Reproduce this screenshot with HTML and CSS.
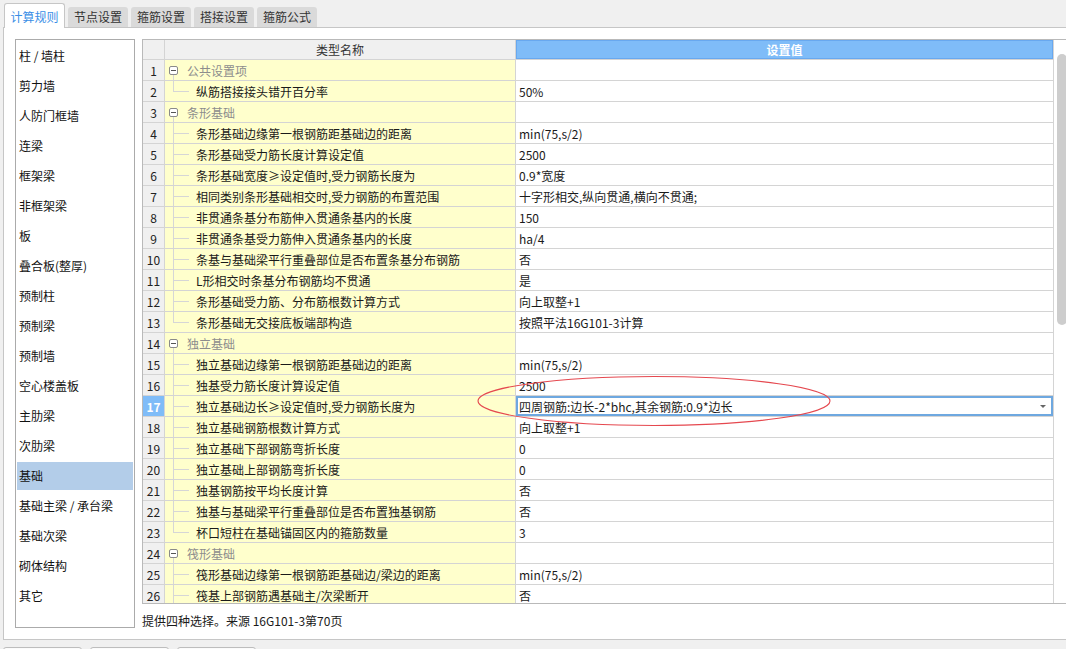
FILE: index.html
```html
<!DOCTYPE html>
<html lang="zh-CN">
<head>
<meta charset="utf-8">
<title>计算规则</title>
<link rel="stylesheet" href="styles.css">
</head>
<body>
<div class="tabs">
  <div class="tab active">计算规则</div>
  <div class="tab">节点设置</div>
  <div class="tab">箍筋设置</div>
  <div class="tab">搭接设置</div>
  <div class="tab">箍筋公式</div>
</div>
<div class="panel">
  <ul class="cats">
    <li>柱 / 墙柱</li>
    <li>剪力墙</li>
    <li>人防门框墙</li>
    <li>连梁</li>
    <li>框架梁</li>
    <li>非框架梁</li>
    <li>板</li>
    <li>叠合板(整厚)</li>
    <li>预制柱</li>
    <li>预制梁</li>
    <li>预制墙</li>
    <li>空心楼盖板</li>
    <li>主肋梁</li>
    <li>次肋梁</li>
    <li class="sel">基础</li>
    <li>基础主梁 / 承台梁</li>
    <li>基础次梁</li>
    <li>砌体结构</li>
    <li>其它</li>
  </ul>
  <div class="main">
    <div class="grid">
      <div class="tbl">
        <div class="row head"><div class="num"></div><div class="name">类型名称</div><div class="val">设置值</div></div>
        <div class="row grp"><div class="num">1</div><div class="name"><span class="box"></span><span class="t">公共设置项</span></div><div class="val"></div></div>
        <div class="row"><div class="num">2</div><div class="name"><span class="br last"></span><span class="t">纵筋搭接接头错开百分率</span></div><div class="val">50%</div></div>
        <div class="row grp"><div class="num">3</div><div class="name"><span class="box"></span><span class="t">条形基础</span></div><div class="val"></div></div>
        <div class="row"><div class="num">4</div><div class="name"><span class="br"></span><span class="t">条形基础边缘第一根钢筋距基础边的距离</span></div><div class="val">min(75,s/2)</div></div>
        <div class="row"><div class="num">5</div><div class="name"><span class="br"></span><span class="t">条形基础受力筋长度计算设定值</span></div><div class="val">2500</div></div>
        <div class="row"><div class="num">6</div><div class="name"><span class="br"></span><span class="t">条形基础宽度≥设定值时,受力钢筋长度为</span></div><div class="val">0.9*宽度</div></div>
        <div class="row"><div class="num">7</div><div class="name"><span class="br"></span><span class="t">相同类别条形基础相交时,受力钢筋的布置范围</span></div><div class="val">十字形相交,纵向贯通,横向不贯通;</div></div>
        <div class="row"><div class="num">8</div><div class="name"><span class="br"></span><span class="t">非贯通条基分布筋伸入贯通条基内的长度</span></div><div class="val">150</div></div>
        <div class="row"><div class="num">9</div><div class="name"><span class="br"></span><span class="t">非贯通条基受力筋伸入贯通条基内的长度</span></div><div class="val">ha/4</div></div>
        <div class="row"><div class="num">10</div><div class="name"><span class="br"></span><span class="t">条基与基础梁平行重叠部位是否布置条基分布钢筋</span></div><div class="val">否</div></div>
        <div class="row"><div class="num">11</div><div class="name"><span class="br"></span><span class="t">L形相交时条基分布钢筋均不贯通</span></div><div class="val">是</div></div>
        <div class="row"><div class="num">12</div><div class="name"><span class="br"></span><span class="t">条形基础受力筋、分布筋根数计算方式</span></div><div class="val">向上取整+1</div></div>
        <div class="row"><div class="num">13</div><div class="name"><span class="br last"></span><span class="t">条形基础无交接底板端部构造</span></div><div class="val">按照平法16G101-3计算</div></div>
        <div class="row grp"><div class="num">14</div><div class="name"><span class="box"></span><span class="t">独立基础</span></div><div class="val"></div></div>
        <div class="row"><div class="num">15</div><div class="name"><span class="br"></span><span class="t">独立基础边缘第一根钢筋距基础边的距离</span></div><div class="val">min(75,s/2)</div></div>
        <div class="row"><div class="num">16</div><div class="name"><span class="br"></span><span class="t">独基受力筋长度计算设定值</span></div><div class="val">2500</div></div>
        <div class="row cur"><div class="num">17</div><div class="name"><span class="br"></span><span class="t">独立基础边长≥设定值时,受力钢筋长度为</span></div><div class="val"><span>四周钢筋:边长-2*bhc,其余钢筋:0.9*边长</span><span class="drop"></span></div></div>
        <div class="row"><div class="num">18</div><div class="name"><span class="br"></span><span class="t">独立基础钢筋根数计算方式</span></div><div class="val">向上取整+1</div></div>
        <div class="row"><div class="num">19</div><div class="name"><span class="br"></span><span class="t">独立基础下部钢筋弯折长度</span></div><div class="val">0</div></div>
        <div class="row"><div class="num">20</div><div class="name"><span class="br"></span><span class="t">独立基础上部钢筋弯折长度</span></div><div class="val">0</div></div>
        <div class="row"><div class="num">21</div><div class="name"><span class="br"></span><span class="t">独基钢筋按平均长度计算</span></div><div class="val">否</div></div>
        <div class="row"><div class="num">22</div><div class="name"><span class="br"></span><span class="t">独基与基础梁平行重叠部位是否布置独基钢筋</span></div><div class="val">否</div></div>
        <div class="row"><div class="num">23</div><div class="name"><span class="br last"></span><span class="t">杯口短柱在基础锚固区内的箍筋数量</span></div><div class="val">3</div></div>
        <div class="row grp"><div class="num">24</div><div class="name"><span class="box"></span><span class="t">筏形基础</span></div><div class="val"></div></div>
        <div class="row"><div class="num">25</div><div class="name"><span class="br"></span><span class="t">筏形基础边缘第一根钢筋距基础边/梁边的距离</span></div><div class="val">min(75,s/2)</div></div>
        <div class="row"><div class="num">26</div><div class="name"><span class="br"></span><span class="t">筏基上部钢筋遇基础主/次梁断开</span></div><div class="val">否</div></div>
      </div>
      <div class="vscroll"><div class="thumb"></div></div>
    </div>
    <div class="hint">提供四种选择。来源 16G101-3第70页</div>
  </div>
</div>
<div class="btns"><span></span><span></span><span></span></div>
<svg class="mark" width="370" height="64" viewBox="0 0 370 64"><ellipse cx="184" cy="31" rx="176" ry="24.5" fill="none" stroke="#e5484f" stroke-width="1.1"/></svg>
</body>
</html>
```
FILE: styles.css
```css
html, body {
  margin: 0;
  padding: 0;
}
body {
  width: 1066px;
  height: 649px;
  overflow: hidden;
  position: relative;
  background: #f0f0f0;
  font-family: "Noto Sans CJK SC", "Microsoft YaHei", sans-serif;
  font-size: 12px;
  color: #1a1a1a;
}

/* tabs */
.tabs {
  display: flex;
  align-items: flex-end;
  height: 27px;
  padding-left: 4px;
  gap: 3px;
}
.tab {
  width: 60px;
  height: 20px;
  line-height: 20px;
  text-align: center;
  background: #dadada;
  border-radius: 3px 3px 0 0;
  color: #333;
  box-sizing: border-box;
}
.tab.active {
  width: 61px;
  height: 25px;
  line-height: 26px;
  background: #fff;
  border: 1px solid #c6c6c6;
  border-bottom: none;
  color: #3a8ee6;
  margin-bottom: -1px;
  position: relative;
  z-index: 1;
}

/* panel */
.panel {
  margin-left: 3px;
  width: 1075px;
  height: 613px;
  box-sizing: border-box;
  border: 1px solid #c6c6c6;
  background: #fff;
  padding: 11px 0 0 11px;
  display: flex;
}
.cats {
  list-style: none;
  margin: 0;
  padding: 2px 1px;
  width: 120px;
  height: 589px;
  box-sizing: border-box;
  border: 1px solid #ababab;
  flex: none;
}
.cats li {
  height: 28px;
  line-height: 28px;
  padding-left: 2px;
  margin-bottom: 2px;
  color: #111;
  white-space: nowrap;
}
.cats li.sel {
  background: #b3cde9;
}

.main {
  margin-left: 7px;
  display: flex;
  flex-direction: column;
}
.grid {
  width: 935px;
  height: 565px;
  box-sizing: border-box;
  border: 1px solid #b9b9b9;
  display: flex;
  overflow: hidden;
}
.tbl {
  width: 911px;
  flex: none;
}
.row {
  display: flex;
  height: 21px;
  box-sizing: border-box;
  border-bottom: 1px solid #d4d4d4;
}
.row > div {
  box-sizing: border-box;
  border-right: 1px solid #d4d4d4;
  display: flex;
  align-items: center;
  white-space: nowrap;
  overflow: hidden;
}
.num {
  width: 22px;
  justify-content: center;
  background: #f0f0f0;
  color: #222;
}
.name {
  width: 351px;
  background: #ffffcc;
}
.val {
  width: 538px;
  padding-left: 3px;
  background: #fff;
}
.row.head {
  height: 20px;
}
.row.head .name {
  background: #f0f0f0;
  justify-content: center;
  color: #333;
}
.row.head .val {
  background: #7fbcf8;
  justify-content: center;
  color: #fff;
  font-weight: bold;
  box-shadow: inset 0 0 0 1px #68a8ef;
  padding-left: 0;
}
.row.grp .name {
  background: linear-gradient(#d6d6d6, #d6d6d6) 8px 15px / 1px 6px no-repeat, #ffffcc;
}
.box {
  width: 9px;
  height: 9px;
  box-sizing: border-box;
  margin-left: 4px;
  border: 1px solid #8a8a8a;
  border-radius: 2px;
  background: linear-gradient(#555, #555) center / 5px 1px no-repeat, #fff;
  flex: none;
}
.grp .t {
  margin-left: 9px;
  color: #8d8d8d;
}
.br {
  align-self: stretch;
  width: 16px;
  margin-left: 8px;
  flex: none;
  background:
    linear-gradient(#d6d6d6, #d6d6d6) 0 0 / 1px 100% no-repeat,
    linear-gradient(#d6d6d6, #d6d6d6) 0 10px / 16px 1px no-repeat;
}
.br.last {
  background:
    linear-gradient(#d6d6d6, #d6d6d6) 0 0 / 1px 11px no-repeat,
    linear-gradient(#d6d6d6, #d6d6d6) 0 10px / 16px 1px no-repeat;
}
.br + .t {
  margin-left: 7px;
}
.row.cur .num {
  background: #7fbcf8;
  color: #fff;
  font-weight: bold;
}
.row.cur .val {
  box-shadow: inset 0 0 0 2px #6ea8e0;
  justify-content: space-between;
}
.drop {
  width: 0;
  height: 0;
  border-left: 3px solid transparent;
  border-right: 3px solid transparent;
  border-top: 3px solid #666;
  margin-right: 7px;
}
.vscroll {
  flex: 1;
  padding-top: 14px;
}
.thumb {
  margin-left: 3px;
  width: 10px;
  height: 271px;
  background: #cdcdcd;
  border-radius: 5px;
}
.hint {
  padding-top: 8px;
  line-height: 18px;
  color: #1a1a1a;
}

/* bottom buttons */
.btns {
  display: flex;
  gap: 8px;
  padding: 7px 0 0 3px;
}
.btns span {
  width: 79px;
  height: 22px;
  box-sizing: border-box;
  border: 1px solid #bdbdbd;
  border-radius: 3px;
  background: #fbfbfb;
}

/* annotation */
.mark {
  position: absolute;
  left: 470px;
  top: 370px;
}
```
